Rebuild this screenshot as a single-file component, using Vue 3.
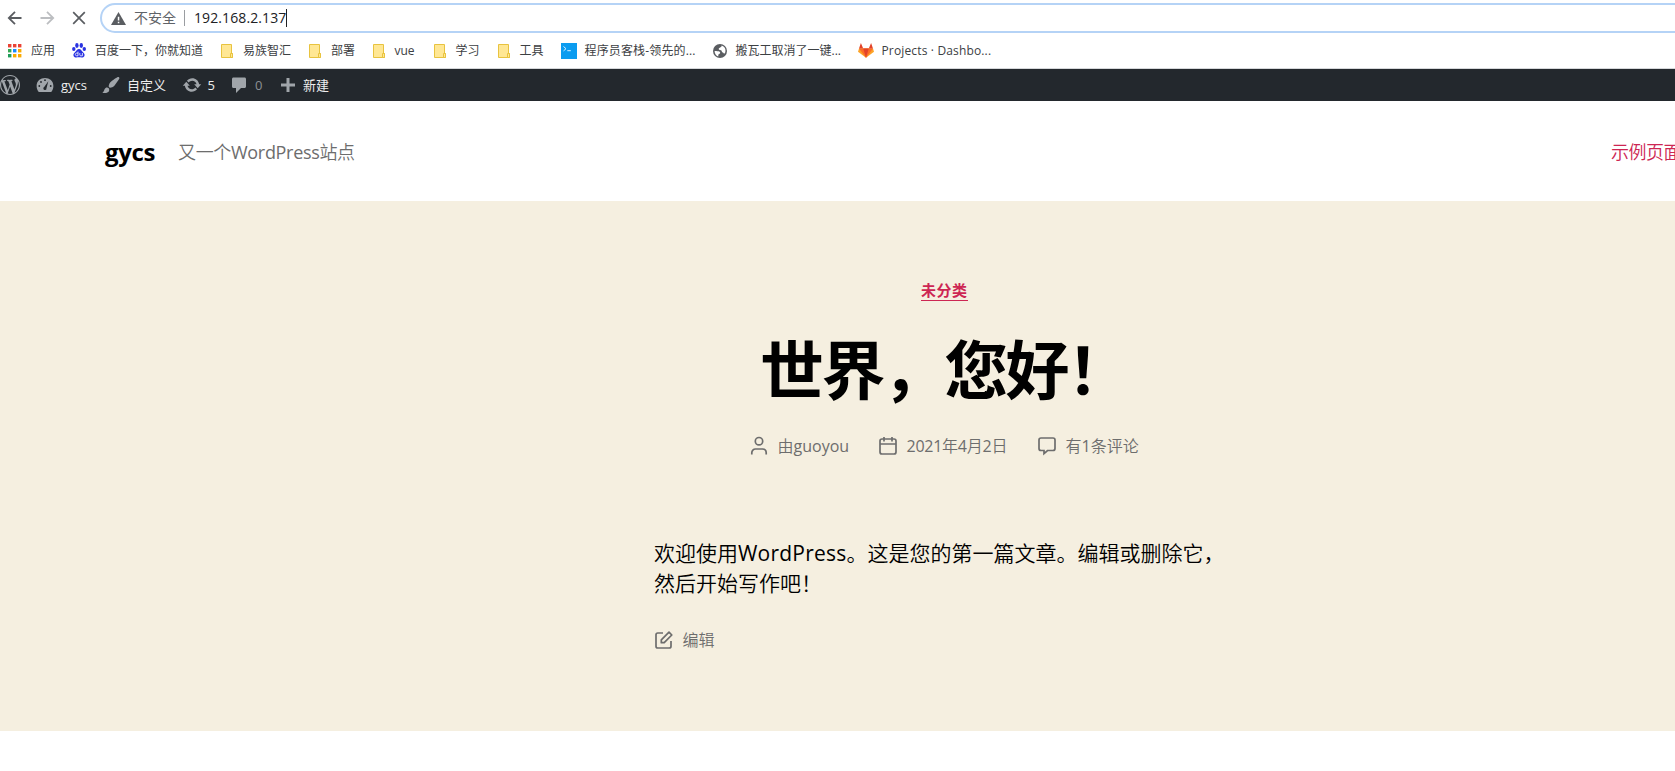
<script setup>
const bookmarks = [
  { icon: 'apps', text: '应用' },
  { icon: 'baidu', text: '百度一下，你就知道' },
  { icon: 'folder', text: '易族智汇' },
  { icon: 'folder', text: '部署' },
  { icon: 'folder', text: 'vue' },
  { icon: 'folder', text: '学习' },
  { icon: 'folder', text: '工具' },
  { icon: 'term', text: '程序员客栈-领先的...' },
  { icon: 'globe', text: '搬瓦工取消了一键...' },
  { icon: 'gitlab', text: 'Projects · Dashbo...' },
]
const appColors = ['#ea4335', '#ea4335', '#ea4335', '#34a853', '#1a8cff', '#fbab00', '#1f9d58', '#fbab00', '#fbab00']
</script>

<template>
  <div class="window">
    <div class="toolbar">
      <svg class="nav" viewBox="0 0 16 16"><path d="M14.5 8H2.2M8 1.8 1.8 8 8 14.2" fill="none" stroke="#5a5d61" stroke-width="1.8" /></svg>
      <svg class="nav" viewBox="0 0 16 16"><path d="M1.5 8h12.3M8 1.8 14.2 8 8 14.2" fill="none" stroke="#bcbec1" stroke-width="1.8" /></svg>
      <svg class="nav" viewBox="0 0 16 16"><path d="M2.2 2.2l11.6 11.6M13.8 2.2 2.2 13.8" fill="none" stroke="#5a5d61" stroke-width="1.7" /></svg>
      <div class="omnibox">
        <svg class="warn" viewBox="0 0 15 13"><path d="M7.5 0 15 13H0z" fill="#5a5d61" /><path d="M6.8 4.8h1.5v3.6H6.8zM6.8 9.7h1.5v1.5H6.8z" fill="#fff" /></svg>
        <span class="insecure">不安全</span>
        <i class="sep"></i>
        <span class="url">192.168.2.137</span>
        <i class="caret"></i>
      </div>
    </div>

    <div class="bookmarks">
      <div v-for="(b, i) in bookmarks" :key="i" class="bm" :class="b.icon">
        <svg v-if="b.icon === 'apps'" width="14" height="14" viewBox="0 0 14 14">
          <rect v-for="(c, k) in appColors" :key="k" :x="(k % 3) * 5" :y="Math.floor(k / 3) * 5" width="3.4" height="3.4" :fill="c" />
        </svg>
        <svg v-else-if="b.icon === 'baidu'" width="14" height="15" viewBox="0 0 14 15" fill="#2932e1">
          <ellipse cx="4.9" cy="2.5" rx="1.7" ry="2.4" /><ellipse cx="9.3" cy="2.5" rx="1.7" ry="2.4" />
          <ellipse cx="1.8" cy="6" rx="1.7" ry="2.1" /><ellipse cx="12.3" cy="6" rx="1.7" ry="2.1" />
          <path d="M7 6c1.800 0 2.500 1.700 3.800 3 1.400 1.400 2.300 2.600 1.500 4.200-.9 1.800-3.200 1.100-5.300 1.100s-4.400.7-5.300-1.100C.9 11.600 1.800 10.400 3.200 9 4.500 7.700 5.200 6 7 6z" />
          <path d="M6 8.600v4.200H4.600c-1.700 0-1.700-2.700 0-2.700H6M7.800 10v1.900c0 .7.400.9.900.9h1.700V10" fill="none" stroke="#fff" stroke-width=".8" />
        </svg>
        <svg v-else-if="b.icon === 'folder'" width="12" height="14" viewBox="0 0 12 14">
          <path d="M.5.500h10v9h1v4H.5z" fill="#ffe794" stroke="#e8c33f" /><path d="M9.500 13V9.500h2v4h-2z" fill="#ffe794" stroke="#e8c33f" />
        </svg>
        <svg v-else-if="b.icon === 'term'" width="16" height="16" viewBox="0 0 16 16">
          <path d="M0 0h16v16H0z" fill="#0b9cf0" /><path d="M2.500 3.500 5 5.700 2.500 7.900M6.300 7.700h3.500" fill="none" stroke="#d8f1ff" stroke-width="1" />
        </svg>
        <svg v-else-if="b.icon === 'globe'" width="14" height="14" viewBox="0 0 14 14">
          <circle cx="7" cy="7" r="7" fill="#5a5d61" />
          <path d="M8.600 1.600C8.800 3.300 7.400 3.300 6.300 3.900 5.300 4.500 5.600 5.800 7 6c1.500.2 1.700.9 1.900 1.700.3.900 1.500.700 1.800 1.600.3 1 1.200 0 1.600-1C13.200 5 11.300 2.400 8.600 1.600zM1.600 7c1.900.3 4-.1 5.100.8 1.100.9.300 2-.7 2.300-1 .4-.5 1.500-.8 2.300C3.200 11.700 1.500 9.600 1.600 7z" fill="#fff" />
        </svg>
        <svg v-else width="16" height="15" viewBox="0 0 16 15">
          <path d="M8 14.800 0 8.800 1 5.400h14l1 3.400z" fill="#fca326" /><path d="M8 14.800 1 5.400h14z" fill="#fc6d26" /><path d="M8 14.800 5.200 5.400h5.600z" fill="#e24329" />
          <path d="M1 5.400 2.900 0l2.300 5.400zM15 5.400 13.100 0l-2.300 5.400z" fill="#e24329" />
        </svg>
        <span class="bm-text">{{ b.text }}</span>
      </div>
    </div>

    <div class="adminbar">
      <div class="ab"><svg width="20" height="20" viewBox="0 0 20 20"><path d="M20 10c0-5.510-4.490-10-10-10C4.480 0 0 4.490 0 10c0 5.520 4.480 10 10 10 5.510 0 10-4.480 10-10zM7.780 15.370L4.370 6.220c.55-.02 1.170-.08 1.170-.08.5-.06.44-1.130-.06-1.110 0 0-1.450.11-2.370.11-.18 0-.37 0-.58-.01C4.120 2.690 6.870 1.110 10 1.110c2.330 0 4.450.87 6.050 2.340-.68-.11-1.650.39-1.650 1.580 0 .74.45 1.360.9 2.100.35.61.55 1.360.55 2.460 0 1.490-1.400 5-1.400 5l-3.030-8.370c.54-.02.82-.17.82-.17.5-.05.44-1.250-.06-1.220 0 0-1.440.12-2.380.12-.87 0-2.330-.12-2.330-.12-.5-.03-.56 1.200-.06 1.220l.92.08 1.260 3.410zM17.410 10c.24-.64.74-1.870.43-4.250.7 1.290 1.050 2.710 1.050 4.250 0 3.290-1.730 6.240-4.400 7.780.97-2.590 1.940-5.200 2.920-7.780zM6.100 18.090C3.120 16.650 1.110 13.530 1.110 10c0-1.300.23-2.480.72-3.590C3.250 10.300 4.670 14.200 6.100 18.090zm4.030-6.630l2.580 6.980c-.86.29-1.760.45-2.710.45-.79 0-1.570-.11-2.290-.33.81-2.380 1.620-4.740 2.420-7.100z" /></svg></div>
      <div class="ab">
        <svg width="20" height="20" viewBox="0 0 20 20"><path d="M3.760 17h12.480c1.340-1.630 2.160-3.720 2.160-6 0-5.180-3.910-8-8.400-8s-8.400 2.820-8.400 8c0 2.280.82 4.370 2.160 6z" />
          <g fill="#23282d"><circle cx="10" cy="5.200" r=".9" /><circle cx="6" cy="7" r=".9" /><circle cx="4.300" cy="11" r=".9" /><circle cx="15.700" cy="11" r=".9" /><path d="M13.300 6.200 11.500 13.200a1.600 1.600 0 1 1-2.300-1.200z" /></g></svg>
        <span>gycs</span>
      </div>
      <div class="ab">
        <svg width="20" height="20" viewBox="0 0 20 20"><path d="M18.330 3.570s.27-.8-.31-1.360c-.53-.52-1.220-.24-1.220-.24-.61.3-5.760 3.470-7.670 5.570-.86.96-2.060 3.790-1.090 4.820.92.98 3.960-.17 4.790-1 2.060-2.060 5.210-7.170 5.500-7.790zM1.400 17.650c2.370-1.560 1.460-3.410 3.230-4.640.93-.65 2.220-.62 3.080.29.63.67.8 2.570-.16 3.460-1.570 1.450-4 1.550-6.150.89z" /></svg>
        <span>自定义</span>
      </div>
      <div class="ab">
        <svg width="20" height="20" viewBox="0 0 20 20"><path d="M10.200 3.280c3.530 0 6.430 2.610 6.920 6h2.080l-3.500 4-3.500-4h2.320c-.45-1.970-2.210-3.450-4.320-3.450-1.450 0-2.730.71-3.540 1.780L4.950 5.660C6.230 4.200 8.110 3.280 10.200 3.280zm-.4 13.440c-3.520 0-6.430-2.610-6.920-6H.8l3.500-4c1.170 1.330 2.330 2.670 3.500 4H5.480c.45 1.970 2.210 3.450 4.320 3.450 1.450 0 2.730-.71 3.540-1.780l1.710 1.950c-1.280 1.460-3.150 2.380-5.250 2.380z" /></svg>
        <span>5</span>
      </div>
      <div class="ab">
        <svg width="20" height="20" viewBox="0 0 20 20"><path d="M4.500 2.500h11c.9 0 1.500.6 1.500 1.500v7.500c0 .9-.6 1.500-1.500 1.500H12l-5 5v-5H4.500c-.9 0-1.500-.6-1.500-1.500V4c0-.9.6-1.500 1.500-1.500z" /></svg>
        <span class="zero">0</span>
      </div>
      <div class="ab">
        <svg width="20" height="20" viewBox="0 0 20 20"><path d="M17 8.500v3h-5.500V17h-3v-5.500H3v-3h5.500V3h3v5.500z" /></svg>
        <span>新建</span>
      </div>
    </div>

    <header class="site-header">
      <b class="site-title">gycs</b>
      <span class="tagline">又一个<span class="latin">WordPress</span>站点</span>
      <a class="menu-link">示例页面</a>
    </header>

    <main class="post">
      <a class="category">未分类</a>
      <h1>世界，您好！</h1>
      <div class="meta">
        <div class="meta-item">
          <svg width="18" height="20" viewBox="0 0 18 20"><circle cx="9" cy="5.200" r="3.700" /><path d="M1.800 18.500v-1.700c0-2.300 1.600-3.800 3.700-3.800h7c2.100 0 3.700 1.500 3.700 3.800v1.700" /></svg>
          <span>由<span class="latin">guoyou</span></span>
        </div>
        <div class="meta-item">
          <svg width="18" height="20" viewBox="0 0 18 20"><rect x="1" y="3" width="16" height="15" rx="2" /><path d="M1 8h16M5 .9v4.500M13 .9v4.500" /></svg>
          <span class="date"><span class="latin">2021</span>年<span class="latin">4</span>月<span class="latin">2</span>日</span>
        </div>
        <div class="meta-item">
          <svg width="18" height="20" viewBox="0 0 18 20"><path d="M3 2h12c1.200 0 2 .8 2 2v8.500c0 1.200-.8 2-2 2H9.500L6 17.600v-3.100H3c-1.200 0-2-.8-2-2V4c0-1.200.8-2 2-2z" /></svg>
          <span>有<span class="latin">1</span>条评论</span>
        </div>
      </div>
      <p class="body-text">欢迎使用<span class="latin wide">WordPress</span>。这是您的第一篇文章。编辑或删除它，<br />然后开始写作吧！</p>
      <div class="edit">
        <svg width="18" height="18" viewBox="0 0 18 18"><path d="M8 2H2.800C1.700 2 1 2.700 1 3.800v11.400C1 16.300 1.700 17 2.800 17h11.400c1.100 0 1.800-.7 1.800-1.800V10M14 1.200l2.800 2.800-7.600 7.700H6.300V8.900z" stroke-linejoin="round" /></svg>
        <span>编辑</span>
      </div>
    </main>
  </div>
</template>

<style>
body {
  margin: 0;
  background: #fff;
  overflow: hidden;
}
</style>

<style scoped>
.window {
  width: 1675px;
  height: 771px;
  overflow: hidden;
  background: #fff;
  font-family: "Open Sans", "Noto Sans CJK SC", sans-serif;
  white-space: nowrap;
}
svg {
  display: block;
  flex: none;
}
.toolbar {
  height: 36px;
  display: flex;
  align-items: center;
  padding-left: 7px;
  box-sizing: border-box;
}
.nav {
  width: 16px;
  height: 16px;
  margin-right: 16px;
}
.omnibox {
  flex: none;
  width: 1620px;
  height: 30px;
  margin-left: -3px;
  box-sizing: border-box;
  border: 2px solid #b5d3f6;
  border-radius: 15px;
  display: flex;
  align-items: center;
  padding-left: 9px;
  font-size: 14px;
  line-height: 20px;
}
.warn {
  width: 15px;
  height: 13px;
}
.insecure {
  margin-left: 8px;
  width: 43px;
  color: #5f6368;
}
.sep {
  width: 1px;
  height: 16px;
  background: #9a9da1;
  margin: 0 9px 0 7px;
}
.url {
  color: #202124;
  letter-spacing: 0.100px;
}
.caret {
  width: 1px;
  height: 18px;
  background: #202124;
}
.bookmarks {
  height: 33px;
  padding: 0 0 3px 8px;
  box-sizing: border-box;
  display: grid;
  grid-template-columns: 64px 149px 88px 63.500px 61px 64px 63px 152px 145px 150px;
  align-items: center;
  border-bottom: 1px solid #d5d7da;
}
.bm {
  display: grid;
  grid-template-columns: 23px auto;
  justify-content: start;
  align-items: center;
  font-size: 12px;
  line-height: 18px;
  color: #3c4043;
}
.bm.folder {
  grid-template-columns: 22px auto;
}
.bm.term,
.bm.gitlab {
  grid-template-columns: 24px auto;
  letter-spacing: 0.150px;
}
.adminbar {
  height: 32px;
  background: #23282d;
  display: grid;
  grid-template-columns: 35px 66px 80.500px 47.500px 49px 80px;
  align-items: center;
  font-size: 13px;
  line-height: 20px;
  color: #eee;
}
.ab {
  display: flex;
  align-items: center;
  gap: 6px;
  fill: #a0a5aa;
}
.ab:last-child {
  gap: 5px;
}
.zero {
  color: #8b9095;
}
.site-header {
  height: 100px;
  display: flex;
  align-items: center;
  padding: 1px 0 0 105px;
  box-sizing: border-box;
}
.site-title {
  flex: none;
  width: 73px;
  font-size: 24px;
  line-height: 30px;
  letter-spacing: -0.350px;
  color: #000;
}
.tagline {
  flex: none;
  width: 1433px;
  font-size: 18px;
  font-weight: 350;
  line-height: 26px;
  color: #6d6d6d;
  letter-spacing: -0.320px;
}
.latin {
  font-weight: 400;
}
.wide {
  letter-spacing: 0.220px;
}
.menu-link {
  flex: none;
  font-size: 18px;
  font-weight: 350;
  line-height: 26px;
  letter-spacing: -0.500px;
  color: #cd2653;
}
.post {
  height: 530px;
  background: #f5efe0;
  display: flex;
  flex-direction: column;
  align-items: flex-start;
}
.category {
  margin: 79px 0 0 921px;
  height: 20px;
  font-size: 15px;
  font-weight: 700;
  line-height: 20px;
  letter-spacing: 0.550px;
  color: #cd2653;
  border-bottom: 1px solid #cd2653;
}
h1 {
  margin: 29px 0 0 760px;
  font-size: 64px;
  font-weight: 700;
  line-height: 80px;
  letter-spacing: -2.600px;
  color: #000;
}
.meta {
  margin: 23px 0 0 750px;
  display: grid;
  grid-template-columns: 129px 159px 120px;
  align-items: center;
  height: 26px;
  font-size: 16px;
  font-weight: 350;
  line-height: 26px;
  color: #6d6d6d;
}
.meta-item {
  display: flex;
  align-items: center;
  gap: 9.500px;
}
.meta-item svg,
.edit svg {
  fill: none;
  stroke: #6d6d6d;
  stroke-width: 1.700;
}
.date {
  letter-spacing: -0.250px;
}
.body-text {
  margin: 79px 0 0 654px;
  font-size: 21px;
  font-weight: 350;
  line-height: 30px;
  color: #000;
}
.edit {
  margin: 32px 0 0 654.500px;
  display: flex;
  align-items: center;
  gap: 10px;
  height: 20px;
  font-size: 16px;
  font-weight: 350;
  line-height: 20px;
  color: #6d6d6d;
}
</style>
